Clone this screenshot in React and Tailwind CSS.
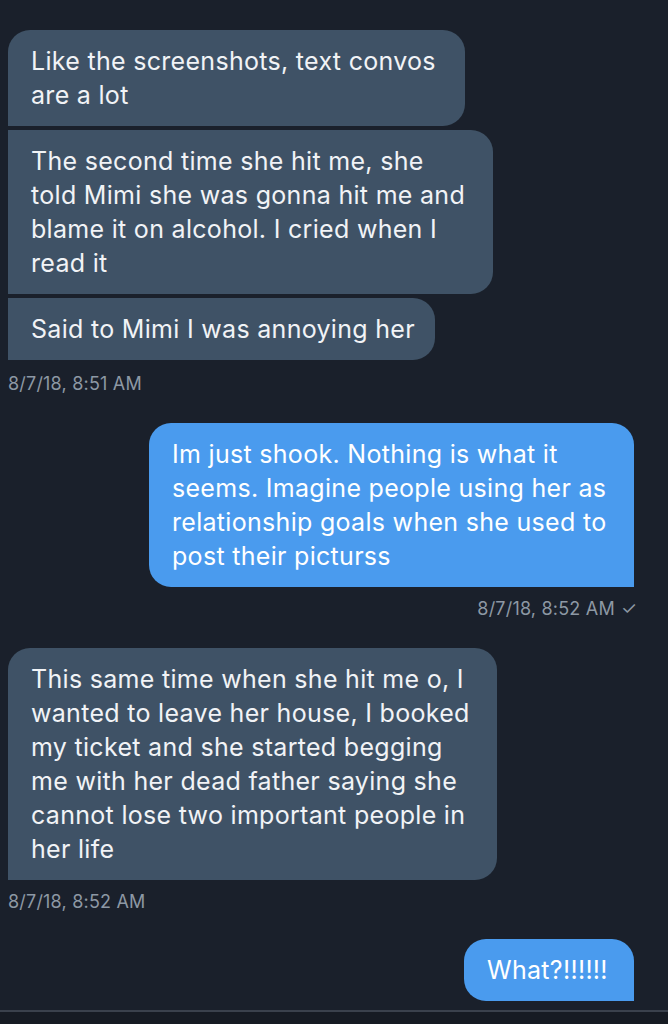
import React from "react";

const messages = [
  {
    from: "them",
    lines: ["Like the screenshots, text convos", "are a lot"],
    corner: "first",
  },
  {
    from: "them",
    lines: [
      "The second time she hit me, she",
      "told Mimi she was gonna hit me and",
      "blame it on alcohol. I cried when I",
      "read it",
    ],
    corner: "middle",
  },
  {
    from: "them",
    lines: ["Said to Mimi I was annoying her"],
    corner: "last",
    time: "8/7/18, 8:51 AM",
  },
  {
    from: "me",
    lines: [
      "Im just shook. Nothing is what it",
      "seems. Imagine people using her as",
      "relationship goals when she used to",
      "post their picturss",
    ],
    time: "8/7/18, 8:52 AM",
  },
  {
    from: "them",
    lines: [
      "This same time when she hit me o, I",
      "wanted to leave her house, I booked",
      "my ticket and she started begging",
      "me with her dead father saying she",
      "cannot lose two important people in",
      "her life",
    ],
    corner: "first",
    time: "8/7/18, 8:52 AM",
    tight: true,
  },
  {
    from: "me",
    lines: ["What?!!!!!!"],
  },
];

const widths = {
  0: "w-[457px]",
  1: "w-[485px]",
  2: "w-[427px]",
  3: "w-[485px]",
  4: "w-[489px]",
  5: "w-[170px]",
};

const font = { fontFamily: "Inter, 'Liberation Sans', sans-serif" };

const Bubble = ({ msg, idx }) => {
  const mine = msg.from === "me";
  const shape = mine
    ? "rounded-[22px] rounded-br-none bg-[#4a9bee] text-white mr-[26px]"
    : msg.corner === "first"
    ? "rounded-[22px] rounded-bl-none bg-[#3f5266] text-[#f1f3f6]"
    : "rounded-r-[22px] bg-[#3f5266] text-[#f1f3f6]";

  return (
    <div className={mine ? "flex justify-end" : "flex justify-start"}>
      <div
        className={`${widths[idx]} ${shape} px-[23px] py-[14px] text-[25px] leading-[34px] tracking-[0.3px] whitespace-nowrap`}
      >
        {msg.lines.map((l, i) => (
          <div key={i}>{l}</div>
        ))}
      </div>
    </div>
  );
};

const App = () => {
  return (
    <div
      className="w-[668px] h-[1024px] overflow-hidden bg-[#1a202b] flex flex-col"
      style={font}
    >
      <div className="flex-1 px-[8px] pt-[30px] flex flex-col">
        {messages.map((msg, idx) => (
          <div key={idx} className="flex flex-col">
            <Bubble msg={msg} idx={idx} />
            {msg.time ? (
              <div
                className={`text-[18px] leading-[20px] tracking-[0.2px] text-[#8d98a4] ${
                  msg.from === "me"
                    ? "text-right mr-[23px] mt-[12px] mb-[29px]"
                    : msg.tight
                    ? "mt-[12px] mb-[27px]"
                    : "mt-[14px] mb-[29px]"
                }`}
              >
                {msg.time}
                {msg.from === "me" && <span className="ml-[6px]">✓</span>}
              </div>
            ) : (
              <div className="h-[4px]" />
            )}
          </div>
        ))}
      </div>
      <div className="h-[2px] bg-[#3a414c]" />
      <div className="h-[12px] bg-[#161b23]" />
    </div>
  );
};

export default App;
